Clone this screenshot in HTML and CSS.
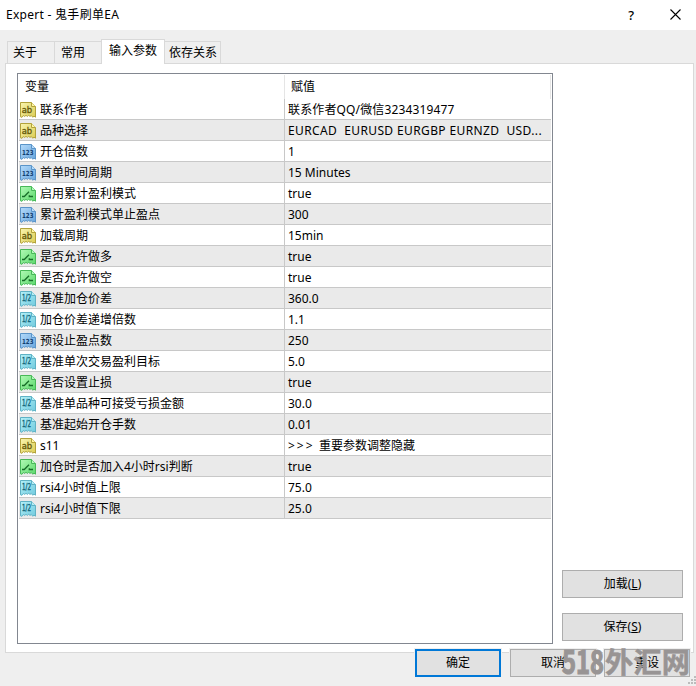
FILE: index.html
```html
<!DOCTYPE html>
<html lang="zh-CN">
<head>
<meta charset="utf-8">
<title>Expert - 鬼手刷单EA</title>
<link rel="stylesheet" href="styles.css">
</head>
<body>
<svg class="defs" aria-hidden="true">
  <defs>
    <linearGradient id="gy" x1="0" y1="0" x2="1" y2="1"><stop offset="0" stop-color="#f9f4ae"/><stop offset="1" stop-color="#dccd55"/></linearGradient>
    <linearGradient id="gb" x1="0" y1="0" x2="1" y2="1"><stop offset="0" stop-color="#b3dafa"/><stop offset="1" stop-color="#68a5dd"/></linearGradient>
    <linearGradient id="gg" x1="0" y1="0" x2="1" y2="1"><stop offset="0" stop-color="#b0f9b4"/><stop offset="1" stop-color="#5cd96c"/></linearGradient>
    <linearGradient id="gc" x1="0" y1="0" x2="1" y2="1"><stop offset="0" stop-color="#b4f1f8"/><stop offset="1" stop-color="#70cade"/></linearGradient>
    <path id="sheet" d="M.5.5H11.5L15.5 4.5V15.2L14 14.2L12.7 15.2L11.3 13.5L10 14.4L8.7 13.3L7.3 14.4L6 13.3L4.7 14.4L3.4 13.5L2 15.3L.5 14.8Z"/>
    <path id="fold" d="M11.5.5V4.5H15.5"/>
    <symbol id="ab" viewBox="0 0 16 16"><g stroke="#b2a23b"><use href="#sheet" fill="url(#gy)"/><use href="#fold" fill="#fff7a8"/></g><text x="1.7" y="11" textLength="10.5" lengthAdjust="spacingAndGlyphs" class="glyph dark" font-size="9.5" fill="#655a0c" stroke="#655a0c">ab</text></symbol>
    <symbol id="int" viewBox="0 0 16 16"><g stroke="#5a94c8"><use href="#sheet" fill="url(#gb)"/><use href="#fold" fill="#b9dcfa"/></g><text x="2" y="11" textLength="11.5" lengthAdjust="spacingAndGlyphs" class="glyph bold" font-size="7" fill="#123f70">123</text></symbol>
    <symbol id="bool" viewBox="0 0 16 16"><g stroke="#48b858"><use href="#sheet" fill="url(#gg)"/><use href="#fold" fill="#b4f8bb"/></g><path d="M2 10.5H4.3L9 5.8M9.3 9.2V10.5H13" fill="none" stroke="#176d28" stroke-width="1.3"/></symbol>
    <symbol id="dbl" viewBox="0 0 16 16"><g stroke="#5fb2c5"><use href="#sheet" fill="url(#gc)"/><use href="#fold" fill="#b5eef6"/></g><text x="2" y="9.6" textLength="9" lengthAdjust="spacingAndGlyphs" class="glyph dark" font-size="8" fill="#14677c" stroke="#14677c">1/2</text></symbol>
  </defs>
</svg>
<div class="window">
  <header class="titlebar">
    <span class="title">Expert - 鬼手刷单EA</span>
    <span class="help">?</span>
    <svg class="close" viewBox="0 0 11 11"><path d="M.5.5L10.5 10.5M10.5.5L.5 10.5"/></svg>
  </header>
  <nav class="tabs">
    <span class="tab">关于</span><span class="tab">常用</span><span class="tab active">输入参数</span><span class="tab last">依存关系</span>
  </nav>
  <main class="panel">
    <div class="list">
      <div class="head"><span class="name">变量</span><span class="value">赋值</span></div>
      <div class="row"><span class="name"><svg class="icon"><use href="#ab"/></svg>联系作者</span><span class="value long">联系作者QQ/微信3234319477</span></div>
      <div class="row"><span class="name"><svg class="icon"><use href="#ab"/></svg>品种选择</span><span class="value pairs">EURCAD  EURUSD EURGBP EURNZD  USD...</span></div>
      <div class="row"><span class="name"><svg class="icon"><use href="#int"/></svg>开仓倍数</span><span class="value">1</span></div>
      <div class="row"><span class="name"><svg class="icon"><use href="#int"/></svg>首单时间周期</span><span class="value">15 Minutes</span></div>
      <div class="row"><span class="name"><svg class="icon"><use href="#bool"/></svg>启用累计盈利模式</span><span class="value">true</span></div>
      <div class="row"><span class="name"><svg class="icon"><use href="#int"/></svg>累计盈利模式单止盈点</span><span class="value">300</span></div>
      <div class="row"><span class="name"><svg class="icon"><use href="#ab"/></svg>加载周期</span><span class="value">15min</span></div>
      <div class="row"><span class="name"><svg class="icon"><use href="#bool"/></svg>是否允许做多</span><span class="value">true</span></div>
      <div class="row"><span class="name"><svg class="icon"><use href="#bool"/></svg>是否允许做空</span><span class="value">true</span></div>
      <div class="row"><span class="name"><svg class="icon"><use href="#dbl"/></svg>基准加仓价差</span><span class="value">360.0</span></div>
      <div class="row"><span class="name"><svg class="icon"><use href="#dbl"/></svg>加仓价差递增倍数</span><span class="value">1.1</span></div>
      <div class="row"><span class="name"><svg class="icon"><use href="#int"/></svg>预设止盈点数</span><span class="value">250</span></div>
      <div class="row"><span class="name"><svg class="icon"><use href="#dbl"/></svg>基准单次交易盈利目标</span><span class="value">5.0</span></div>
      <div class="row"><span class="name"><svg class="icon"><use href="#bool"/></svg>是否设置止损</span><span class="value">true</span></div>
      <div class="row"><span class="name"><svg class="icon"><use href="#dbl"/></svg>基准单品种可接受亏损金额</span><span class="value">30.0</span></div>
      <div class="row"><span class="name"><svg class="icon"><use href="#dbl"/></svg>基准起始开仓手数</span><span class="value">0.01</span></div>
      <div class="row"><span class="name"><svg class="icon"><use href="#ab"/></svg>s11</span><span class="value"><span class="arrows">&gt;&gt;&gt;</span>重要参数调整隐藏</span></div>
      <div class="row"><span class="name"><svg class="icon"><use href="#bool"/></svg>加仓时是否加入4小时rsi判断</span><span class="value">true</span></div>
      <div class="row"><span class="name"><svg class="icon"><use href="#dbl"/></svg>rsi4小时值上限</span><span class="value">75.0</span></div>
      <div class="row"><span class="name"><svg class="icon"><use href="#dbl"/></svg>rsi4小时值下限</span><span class="value">25.0</span></div>
    </div>
    <aside class="side">
      <button class="btn">加载(<u>L</u>)</button>
      <button class="btn">保存(<u>S</u>)</button>
    </aside>
  </main>
  <footer class="actions">
    <button class="btn primary">确定</button>
    <button class="btn">取消</button>
    <button class="btn">重设</button>
  </footer>
  <svg class="watermark" viewBox="0 0 136 36">
    <text class="digits" x="2" y="28" font-size="32" textLength="42" lengthAdjust="spacingAndGlyphs">518</text>
    <text x="45" y="27" font-size="28" textLength="85" lengthAdjust="spacingAndGlyphs">外汇网</text>
  </svg>
  <svg class="grip" viewBox="0 0 8 8"><path d="M6 0h2v2h-2zM3 3h2v2h-2zM6 3h2v2h-2zM0 6h2v2h-2zM3 6h2v2h-2zM6 6h2v2h-2z"/></svg>
</div>
</body>
</html>
```
FILE: styles.css
```css
* { box-sizing: border-box; }
body {
  margin: 0;
  background: #efefef;
  color: #000;
  font: 12px/20px "Noto Sans", "Noto Sans CJK SC", sans-serif;
}
.defs { position: absolute; width: 0; height: 0; }
.window { position: relative; width: 696px; height: 686px; overflow: hidden; }

.titlebar {
  display: flex;
  align-items: center;
  height: 30px;
  padding: 0 15px 0 6px;
  background: #fff;
}
.title { flex: 1; letter-spacing: .28px; }
.help { margin-right: 36px; font-size: 13px; font-weight: 500; }
.close { width: 11px; height: 11px; margin-top: -1px; stroke: #000; stroke-width: 1.1; }

.tabs { display: flex; align-items: flex-end; height: 33px; padding-left: 7px; }
.tab {
  width: 47px;
  height: 22px;
  padding-left: 5px;
  border: 1px solid #d9d9d9;
  border-width: 1px 0 0 1px;
  line-height: 21px;
}
.tab + .tab { padding-left: 6px; }
.tab.active {
  position: relative;
  z-index: 1;
  width: 64px;
  height: 25px;
  margin-bottom: -1px;
  padding-left: 7px;
  border-right-width: 1px;
  background: #fff;
  line-height: 22px;
}
.tab.last { width: 56px; padding-left: 4px; border-left: 0; border-right-width: 1px; }

.panel {
  display: flex;
  width: 689px;
  height: 590px;
  margin-left: 5px;
  padding: 9px 10px 8px 11px;
  border: 1px solid #d9d9d9;
  background: #fff;
}
.list {
  width: 536px;
  height: 571px;
  padding: 1px 1px 0;
  border: 1px solid #828790;
}
.head, .row { display: flex; }
.head { height: 24px; line-height: 23px; border-right: 1px solid #e5e5e5; }
.row { height: 21px; border-bottom: 1px solid #c8c8c8; }
.row:nth-child(odd) { background: #eaeaea; }
.name { display: flex; width: 265px; }
.value {
  flex: 1;
  padding-left: 3px;
  border-left: 1px solid #c8c8c8;
  white-space: pre;
}
.row .name, .row .value { height: 20px; padding-top: 1px; }
.long { letter-spacing: .14px; }
.pairs { letter-spacing: .38px; }
.head .name { padding-left: 6px; }
.head .value { padding-left: 6px; border-left-color: #e5e5e5; }
.icon { width: 16px; height: 16px; margin: 2px 4px 0 1px; }
.arrows { display: inline-block; width: 31px; letter-spacing: 2px; }
.glyph { font-family: "DejaVu Sans", sans-serif; }
.dark { stroke-width: .35; }
.bold { font-weight: 700; }

.side {
  display: flex;
  flex-direction: column;
  justify-content: flex-end;
  gap: 15px;
  flex: 1;
  margin-left: 9px;
  padding-bottom: 3px;
}
.btn {
  height: 28px;
  padding: 0 0 1px;
  border: 1px solid #adadad;
  background: #e1e1e1;
  color: #000;
  font: inherit;
}
.side .btn { width: 121px; }
u { text-underline-offset: 1px; }
.actions {
  display: flex;
  position: relative;
  gap: 9px;
  margin-top: -4px;
  padding-left: 415px;
}
.actions .btn { width: 86px; box-shadow: 0 0 0 1px #efefef; }
.actions .btn:last-child { margin-left: -1px; }
.actions .primary { border: 2px solid #0078d7; }

.watermark {
  position: absolute;
  left: 560px;
  top: 646px;
  width: 136px;
  height: 36px;
  overflow: visible;
  fill: #989494;
  stroke: #989494;
  stroke-width: .5;
  font-family: "Noto Sans CJK SC", sans-serif;
  font-weight: 700;
}
.digits { stroke-width: 1.2; }
.grip { position: absolute; right: 0; bottom: 2px; width: 8px; height: 8px; fill: #bcbcbc; }
```
